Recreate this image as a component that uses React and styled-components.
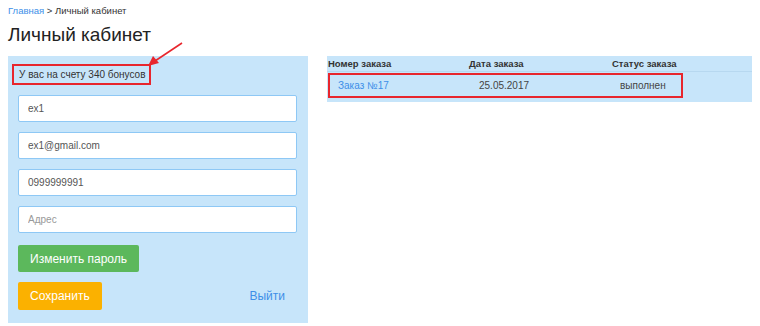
import styled, { createGlobalStyle } from "styled-components";

const GlobalStyle = createGlobalStyle`
  body {
    margin: 0;
    background: #fff;
    font-family: "Liberation Sans", Arial, sans-serif;
    color: #333;
  }
`;

const FIELDS = [
  { value: "ex1" },
  { value: "ex1@gmail.com" },
  { value: "0999999991" },
  { placeholder: "Адрес" },
];

const ORDERS = [{ id: 17, date: "25.05.2017", status: "выполнен" }];

const App = () => (
  <Page>
    <GlobalStyle />
    <Breadcrumbs>
      <CrumbLink>Главная</CrumbLink> &gt; Личный кабинет
    </Breadcrumbs>
    <Title>Личный кабинет</Title>
    <Columns>
      <ProfilePanel>
        <Bonus>У вас на счету 340 бонусов</Bonus>
        <Form>
          {FIELDS.map((field, i) => (
            <Field
              key={i}
              defaultValue={field.value}
              placeholder={field.placeholder}
            />
          ))}
          <Button $color="#5cb85c" $top={2}>
            Изменить пароль
          </Button>
          <ActionRow>
            <Button $color="#fbb100" $h={28}>
              Сохранить
            </Button>
            <LogoutLink>Выйти</LogoutLink>
          </ActionRow>
        </Form>
      </ProfilePanel>
      <Orders>
        <HeadRow>
          <HeadCell $w={141}>Номер заказа</HeadCell>
          <HeadCell $w={143}>Дата заказа</HeadCell>
          <HeadCell>Статус заказа</HeadCell>
        </HeadRow>
        {ORDERS.map((order) => (
          <OrderRow key={order.id}>
            <Highlight>
              <Cell $w={141}>
                <OrderLink>Заказ №{order.id}</OrderLink>
              </Cell>
              <Cell $w={141}>{order.date}</Cell>
              <Cell>{order.status}</Cell>
            </Highlight>
          </OrderRow>
        ))}
      </Orders>
    </Columns>
    <Arrow width="40" height="30" viewBox="0 0 40 30">
      <line x1="37" y1="2" x2="10" y2="20" stroke="#e8262d" strokeWidth="1.6" />
      <polygon points="3,25 8,15 14,22" fill="#e8262d" />
    </Arrow>
  </Page>
);

export default App;

const Page = styled.div`
  position: relative;
  padding: 5px 8px 0;
`;

const Breadcrumbs = styled.div`
  font-size: 9.5px;
  line-height: 12px;
  color: #333;
`;

const CrumbLink = styled.a`
  color: #3d8fe8;
`;

const Title = styled.h1`
  margin: 7px 0 11px;
  font-size: 19px;
  font-weight: normal;
  line-height: 21px;
  color: #222;
`;

const Columns = styled.div`
  display: flex;
  align-items: flex-start;
  gap: 19px;
`;

const ProfilePanel = styled.div`
  width: 300px;
  background: #c7e5fa;
  padding: 8px 0 13px;
`;

const Bonus = styled.div`
  display: inline-block;
  margin-left: 4px;
  padding: 0 4px 0 5px;
  height: 17px;
  line-height: 17px;
  font-size: 10px;
  color: #333;
  border: 2px solid #e8262d;
`;

const Form = styled.div`
  display: flex;
  flex-direction: column;
  gap: 10px;
  padding: 10px 11px 0 10px;
`;

const Field = styled.input`
  box-sizing: border-box;
  width: 279px;
  height: 27px;
  padding: 0 9px;
  border: 1px solid #8ec8f5;
  border-radius: 2px;
  background: #fff;
  font-family: inherit;
  font-size: 10px;
  color: #555;
  outline: none;

  &::placeholder {
    color: #999;
  }
`;

const Button = styled.button`
  align-self: flex-start;
  margin-top: ${(p) => p.$top || 0}px;
  height: ${(p) => p.$h || 27}px;
  padding: 0 12px;
  border: none;
  border-radius: 2px;
  background: ${(p) => p.$color};
  color: #fff;
  font-family: inherit;
  font-size: 12px;
`;

const ActionRow = styled.div`
  display: flex;
  align-items: center;
  justify-content: space-between;
  padding-right: 12px;
`;

const LogoutLink = styled.a`
  color: #3d8fe8;
  font-size: 12px;
`;

const Orders = styled.div`
  width: 429px;
  background: #c7e5fa;
`;

const HeadRow = styled.div`
  display: flex;
  height: 15px;
  align-items: center;
  border-bottom: 1px solid #b7d8f0;
  padding-left: 1px;
`;

const HeadCell = styled.div`
  width: ${(p) => (p.$w ? `${p.$w}px` : "auto")};
  font-size: 9.5px;
  font-weight: bold;
  color: #333;
`;

const OrderRow = styled.div`
  height: 29px;
  padding: 1px 0 0 1px;
`;

const Highlight = styled.div`
  box-sizing: border-box;
  display: flex;
  align-items: center;
  width: 355px;
  height: 25px;
  padding-left: 8px;
  border: 2px solid #e8262d;
  font-size: 10px;
  color: #444;
`;

const Cell = styled.div`
  width: ${(p) => (p.$w ? `${p.$w}px` : "auto")};
`;

const OrderLink = styled.a`
  color: #3d8fe8;
`;

const Arrow = styled.svg`
  position: absolute;
  left: 145px;
  top: 41px;
`;
